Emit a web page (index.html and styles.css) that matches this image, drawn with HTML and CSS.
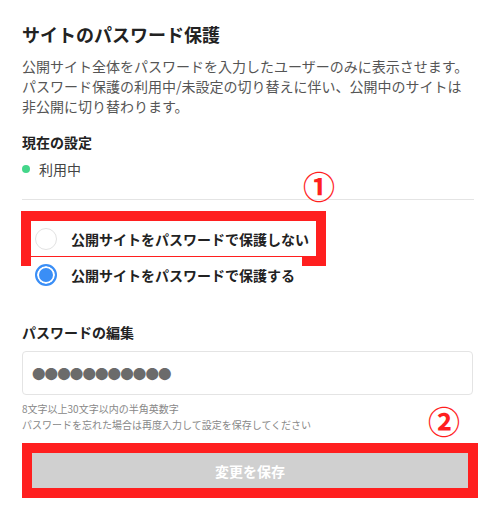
FILE: index.html
```html
<!DOCTYPE html>
<html lang="ja">
<head>
    <meta charset="UTF-8">
    <meta name="viewport" content="width=device-width, initial-scale=1.0">
    <title>サイトのパスワード保護</title>
    <link rel="stylesheet" href="styles.css">
</head>
<body>
    <div class="panel">
        <h1 class="panel-title">サイトのパスワード保護</h1>
        <p class="panel-desc">公開サイト全体をパスワードを入力したユーザーのみに表示させます。パスワード保護の利用中/未設定の切り替えに伴い、公開中のサイトは非公開に切り替わります。</p>

        <div class="section-title">現在の設定</div>
        <div class="status"><span class="status-dot"></span>利用中</div>

        <div class="divider"></div>

        <div class="options">
            <label class="option marked">
                <span class="radio"></span>
                <span class="option-label">公開サイトをパスワードで保護しない</span>
            </label>
            <label class="option">
                <span class="radio checked"></span>
                <span class="option-label">公開サイトをパスワードで保護する</span>
            </label>
        </div>

        <div class="section-title pw-title">パスワードの編集</div>
        <div class="pw-input"><span class="pw-mask">●●●●●●●●●●●</span></div>
        <div class="hint">
            8文字以上30文字以内の半角英数字<br>
            パスワードを忘れた場合は再度入力して設定を保存してください
        </div>

        <div class="save-wrap">
            <button type="button" class="save-btn" disabled>変更を保存</button>
        </div>

        <span class="mark mark-1">①</span>
        <span class="mark mark-2">②</span>
    </div>
</body>
</html>
```

FILE: styles.css
```css
:root {
    --text-dark: #222;
    --text-body: #555;
    --text-hint: #888;
    --line: #e4e4e4;
    --blue: #3a8ef6;
    --green: #44d68a;
    --mark-red: #ff1f1f;
}

body {
    margin: 0;
    background: #fff;
    font-family: 'Noto Sans CJK JP', 'Noto Sans', sans-serif;
    color: var(--text-dark);
}

.panel {
    position: relative;
    padding: 22px 22px 0 22px;
    width: 452px;
}

.panel-title {
    margin: 0;
    font-size: 18px;
    line-height: 24px;
    font-weight: 700;
}

.panel-desc {
    margin: 10px 0 0 0;
    font-size: 14px;
    line-height: 20px;
    color: var(--text-body);
}

.section-title {
    margin-top: 16px;
    font-size: 14px;
    line-height: 20px;
    font-weight: 700;
}

.status {
    display: flex;
    align-items: center;
    gap: 9px;
    margin-top: 7px;
    font-size: 14px;
    line-height: 20px;
    color: #444;
}
.status-dot {
    width: 8px;
    height: 8px;
    border-radius: 50%;
    background: var(--green);
}

.divider {
    height: 1px;
    background: var(--line);
    margin-top: 20px;
}

.options {
    display: flex;
    flex-direction: column;
    align-items: flex-start;
    margin-top: 21px;
    margin-left: 9px;
}
.option {
    display: flex;
    align-items: center;
    gap: 14px;
    height: 35px;
    padding: 0 7px 0 4px;
    background: #fff;
}
.option + .option {
    margin-top: 1px;
}
.option.marked {
    outline: 10px solid var(--mark-red);
}
.radio {
    box-sizing: border-box;
    width: 22px;
    height: 22px;
    border-radius: 50%;
    border: 1px solid #e2e2e2;
    background: #fff;
}
.radio.checked {
    border: 2px solid var(--blue);
    background: var(--blue);
    box-shadow: inset 0 0 0 2px #fff;
}
.option-label {
    font-size: 14px;
    font-weight: 700;
    color: var(--text-dark);
}

.pw-title {
    margin-top: 30px;
}

.pw-input {
    box-sizing: border-box;
    height: 44px;
    margin-top: 9px;
    width: 451px;
    border: 1px solid var(--line);
    border-radius: 4px;
    display: flex;
    align-items: center;
    padding-left: 9px;
}
.pw-mask {
    font-size: 13.5px;
    letter-spacing: -0.9px;
    color: #6b6b6b;
}

.hint {
    margin-top: 6px;
    font-size: 10px;
    line-height: 16px;
    color: var(--text-hint);
}

.save-wrap {
    margin-top: 10px;
    border: 10px solid var(--mark-red);
    width: 436px;
}
.save-btn {
    display: block;
    width: 100%;
    height: 35px;
    border: none;
    background: #d0d0d0;
    color: #fff;
    font-family: inherit;
    font-size: 14px;
    font-weight: 700;
}

.mark {
    position: absolute;
    color: var(--mark-red);
    font-size: 32px;
    font-weight: 700;
    line-height: 1;
}
.mark-1 {
    left: 303px;
    top: 169px;
}
.mark-2 {
    left: 428px;
    top: 404px;
}
```
